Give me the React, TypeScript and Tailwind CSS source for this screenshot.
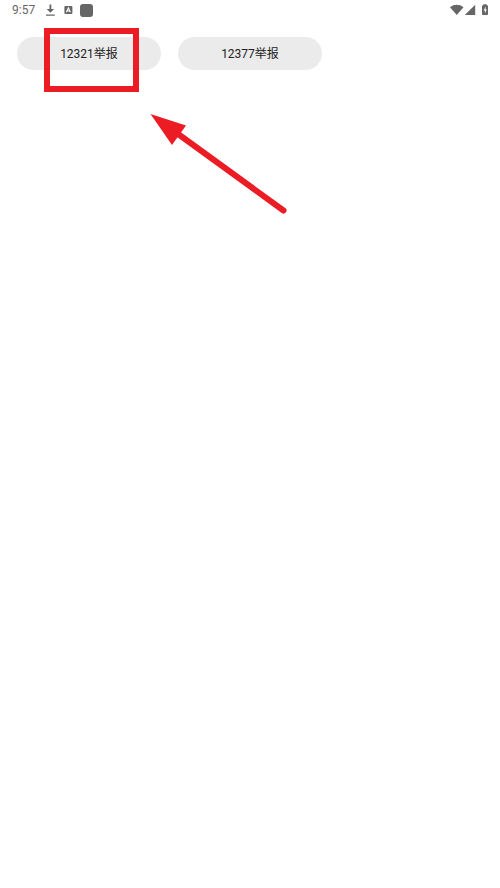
import React from 'react';

interface ReportChannel {
  id: string;
  label: string;
}

const channels: ReportChannel[] = [
  { id: '12321', label: '12321举报' },
  { id: '12377', label: '12377举报' },
];

const StatusBar = () => (
  <header className="flex h-5 items-center justify-between px-3 text-[#666666]">
    <div className="flex items-center">
      <time className="w-8 text-xs leading-5">9:57</time>
      <svg className="h-3 w-3" viewBox="0 0 12 12" fill="currentColor" aria-hidden="true">
        <path d="M5.500 .5h1.800v4.500h2.800L6.400 8.700 2.700 5h2.800zM2 10.600h8.800v1.200H2z" />
      </svg>
      <svg className="ml-2 h-2 w-2 overflow-visible" viewBox="0 0 8 8" aria-hidden="true">
        <rect x="0.400" width="8" height="8" rx="1" fill="currentColor" />
        <path d="M2.400 6.200 4.400 1.800l2 4.400M3.200 5h2.400" fill="none" stroke="#ffffff" strokeWidth="1.100" />
      </svg>
      <span className="ml-2 h-[13px] w-[13px] rounded-[3px] bg-[#666666]" />
    </div>
    <div className="flex items-center">
      <svg className="h-3 w-3.5" viewBox="0 0 14 12" fill="currentColor" aria-hidden="true">
        <path d="M0 3.200C4 -.1 9.500 -.1 13.500 3.200L6.750 11z" />
      </svg>
      <svg className="h-3 w-3" viewBox="0 0 12 12" fill="currentColor" aria-hidden="true">
        <path d="M11.200 .8v10.300H.8z" />
      </svg>
      <svg className="ml-1.5 h-3 w-1.5" viewBox="0 0 6 12" aria-hidden="true">
        <path
          d="M1.300 .2h3.400v1h.5q.8 0 .8.900v8q0 .9-.8.900H.8q-.8 0-.8-.9v-8q0-.9.800-.9h.5z"
          fill="currentColor"
        />
        <path d="M3.600 2.600 1.700 6.500h1.200v3l1.800-4H3.600z" fill="#ffffff" />
      </svg>
    </div>
  </header>
);

const ReportButton = ({ label }: { label: string }) => (
  <button type="button" className="h-[33px] w-36 rounded-full bg-[#ebebeb] text-xs text-[#222222]">
    {label}
  </button>
);

const Highlight = () => (
  <div className="pointer-events-none absolute left-[44px] top-[28px] h-16 w-[95px] border-6 border-[#ec1c24]" />
);

const Arrow = () => (
  <svg
    className="pointer-events-none absolute left-[148px] top-[112px] h-[104px] w-[142px]"
    viewBox="148 112 142 104"
    aria-hidden="true"
  >
    <path d="M176 132.500 283.500 210.500" stroke="#ec1c24" strokeWidth="6" strokeLinecap="round" />
    <path d="M150.500 114 186 125.500 172 145z" fill="#ec1c24" />
  </svg>
);

export default function App() {
  return (
    <div className="relative min-h-screen bg-white font-[Roboto,'Noto_Sans_CJK_SC',sans-serif]">
      <StatusBar />
      <main className="flex gap-[17px] px-[17px] pt-[17px]">
        {channels.map((channel) => (
          <ReportButton key={channel.id} label={channel.label} />
        ))}
      </main>
      <Highlight />
      <Arrow />
    </div>
  );
}
